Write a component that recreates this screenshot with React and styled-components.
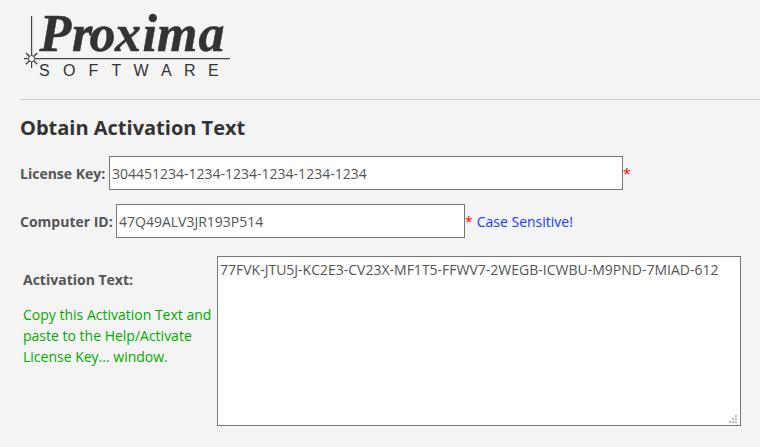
import React, { useState } from "react";
import styled, { createGlobalStyle } from "styled-components";

const GlobalStyle = createGlobalStyle`
   * {
      box-sizing: border-box;
   }
   body {
      margin: 0;
      background: #f4f4f4;
      color: #555;
      font-family: "Open Sans", sans-serif;
      font-size: 14px;
      line-height: 21px;
      overflow: hidden;
   }
`;

const PageStyles = styled.div`
   height: 447px;
   padding-left: 20px;
   overflow: hidden;
`;

const Header = styled.header`
   height: 100px;
   border-bottom: 1px solid #ccc;
   svg {
      display: block;
      overflow: visible;
   }
`;

const Title = styled.h1`
   margin: 13px 0 14px;
   color: #333;
   font-size: 20px;
   font-weight: 700;
   line-height: 29px;
`;

const Row = styled.div`
   display: flex;
   align-items: center;
   height: 34px;
   margin-bottom: 14px;
`;

const Label = styled.label`
   flex: none;
   width: ${(props) => props.$width};
   font-weight: 700;
   white-space: nowrap;
`;

const TextInput = styled.input`
   flex: none;
   width: ${(props) => props.$width};
   height: 34px;
   padding: 2px 2px 1px;
   border: 1px solid #767676;
   border-radius: 0;
   background: #fff;
   color: #555;
   font: inherit;
   outline: none;
`;

const Required = styled.span`
   color: #f00;
`;

const Hint = styled.span`
   margin-left: 4px;
   color: #1439ff;
`;

const ActivationRow = styled.div`
   display: flex;
   margin-top: 18px;
   padding-left: 3px;
`;

const ActivationInfo = styled.div`
   flex: none;
   width: 194px;
   padding-top: 13px;
   p {
      margin: 14px 0 0;
      color: #0a0;
   }
`;

const TextAreaWrap = styled.div`
   position: relative;
   width: 524px;
   height: 170px;
   svg {
      position: absolute;
      right: 4px;
      bottom: 3px;
   }
`;

const TextArea = styled.textarea`
   display: block;
   width: 100%;
   height: 100%;
   padding: 2px;
   border: 1px solid #767676;
   border-radius: 0;
   background: #fff;
   color: #555;
   font: inherit;
   outline: none;
   resize: none;
`;

const Logo = () => (
   <svg width="216" height="90" viewBox="20 0 216 90" fill="#333">
      <g stroke="#444" strokeWidth="1.2" fill="none">
         <path d="M31.6 16V55M31.6 62V68M24 58.6H28M35 58.6H230" />
         <path d="M29.4 56.4L26 53M33.8 56.4L37.2 53M29.4 60.8L26 64.2M33.8 60.8L37.2 64.2" strokeWidth="1.4" />
         <circle cx="31.6" cy="58.6" r="3.1" fill="#fafafa" strokeWidth="1" />
      </g>
      <text x="39.5 72 89.5 115 142.5 157 198.5" y="51" fontFamily="Liberation Serif, serif" fontSize="52" fontWeight="700" fontStyle="italic" stroke="#333" strokeWidth="0.5">
         Proxima
      </text>
      <text x="39 63 88.5 111.5 133.5 161 184 208" y="75.8" fontFamily="Liberation Sans, sans-serif" fontSize="16">
         SOFTWARE
      </text>
   </svg>
);

const ResizeGrip = () => (
   <svg width="8" height="8" fill="#bcbcbc" shapeRendering="crispEdges">
      <path d="M6 0h2v2h-2zM3 3h2v2h-2zM6 3h2v2h-2zM0 6h2v2h-2zM3 6h2v2h-2zM6 6h2v2h-2z" />
   </svg>
);

const App = () => {
   const [licenseKey, setLicenseKey] = useState("304451234-1234-1234-1234-1234-1234");
   const [computerId, setComputerId] = useState("47Q49ALV3JR193P514");
   const activationText = "77FVK-JTU5J-KC2E3-CV23X-MF1T5-FFWV7-2WEGB-ICWBU-M9PND-7MIAD-612";
   return (
      <PageStyles>
         <GlobalStyle />
         <Header>
            <Logo />
         </Header>
         <Title>Obtain Activation Text</Title>
         <Row>
            <Label $width="89px" htmlFor="license">License Key:</Label>
            <TextInput id="license" $width="514px" value={licenseKey} onChange={(e) => setLicenseKey(e.target.value)} />
            <Required>*</Required>
         </Row>
         <Row>
            <Label $width="96px" htmlFor="computer">Computer ID:</Label>
            <TextInput id="computer" $width="349px" value={computerId} onChange={(e) => setComputerId(e.target.value)} />
            <Required>*</Required>
            <Hint>Case Sensitive!</Hint>
         </Row>
         <ActivationRow>
            <ActivationInfo>
               <Label htmlFor="activation">Activation Text:</Label>
               <p>
                  Copy this Activation Text and
                  <br />
                  paste to the Help/Activate
                  <br />
                  License Key... window.
               </p>
            </ActivationInfo>
            <TextAreaWrap>
               <TextArea id="activation" readOnly spellCheck={false} value={activationText} />
               <ResizeGrip />
            </TextAreaWrap>
         </ActivationRow>
      </PageStyles>
   );
};

export default App;
